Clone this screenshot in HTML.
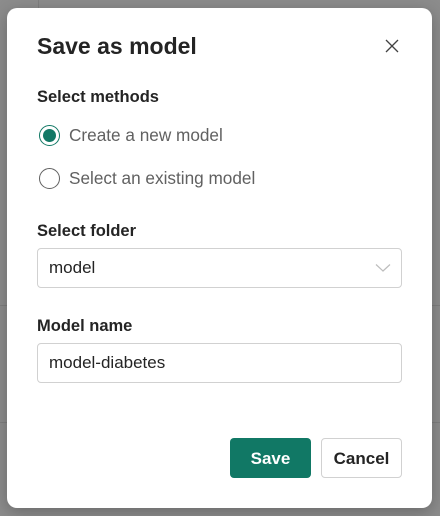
<!DOCTYPE html>
<html><head><style>
*{box-sizing:border-box;margin:0;padding:0}
body{width:440px;height:516px;background:#8a8a8a;position:relative;overflow:hidden;font-family:"Liberation Sans",sans-serif;color:#242424}
.bg1{position:absolute;left:0;top:0;width:440px;height:516px;background:#8c8c8c}
.line{position:absolute;background:#7e7e7e}
.dlg{position:absolute;left:7px;top:8px;width:425px;height:500px;background:#fff;border-radius:10px;box-shadow:0 4px 16px rgba(0,0,0,.25)}
.abs{position:absolute;white-space:nowrap}
.title{left:30px;top:24px;font-size:23px;font-weight:600}
.lbl{font-size:16.5px;font-weight:700;left:30px}
.radio{position:absolute;width:21px;height:21px;border-radius:50%;border:1px solid #616161;left:32px}
.radio.on{border-color:#117865}
.radio.on::after{content:"";position:absolute;left:3px;top:3px;width:13px;height:13px;border-radius:50%;background:#117865}
.rt{left:62px;font-size:17.2px;color:#616161}
.box{position:absolute;left:30px;width:365px;height:40px;border:1px solid #d1d1d1;border-radius:4px;font-size:17px;padding:9px 11px}
.btn{position:absolute;top:430px;width:81px;height:40px;border-radius:4px;font-size:17px;font-weight:700;text-align:center;line-height:42px}
</style></head><body>
<div class="bg1"></div>
<div class="line" style="left:38px;top:0;width:1px;height:8px"></div>
<div class="line" style="left:0;top:305px;width:440px;height:1px"></div>
<div class="line" style="left:0;top:422px;width:440px;height:1px"></div>
<div class="dlg">
<div class="abs title" style="top:25px">Save as model</div>
<svg class="abs" style="left:377px;top:30px" width="16" height="16" viewBox="0 0 16 16"><path d="M2 2L14 14M14 2L2 14" stroke="#424242" stroke-width="1.3" fill="none"/></svg>
<div class="abs lbl" style="top:80px">Select methods</div>
<div class="radio on" style="top:117px"></div>
<div class="abs rt" style="top:117px">Create a new model</div>
<div class="radio" style="top:160px"></div>
<div class="abs rt" style="top:160px">Select an existing model</div>
<div class="abs lbl" style="top:214px">Select folder</div>
<div class="box" style="top:240px">model
<svg style="position:absolute;right:10px;top:14px" width="16" height="10" viewBox="0 0 16 10"><path d="M1 1.5L8 8L15 1.5" stroke="#bdbdbd" stroke-width="1.2" fill="none"/></svg></div>
<div class="abs lbl" style="top:309px">Model name</div>
<div class="box" style="top:335px">model-diabetes</div>
<div class="btn" style="left:223px;background:#117865;color:#fff">Save</div>
<div class="btn" style="left:314px;border:1px solid #d1d1d1;color:#242424;line-height:40px">Cancel</div>
</div>
</body></html>
